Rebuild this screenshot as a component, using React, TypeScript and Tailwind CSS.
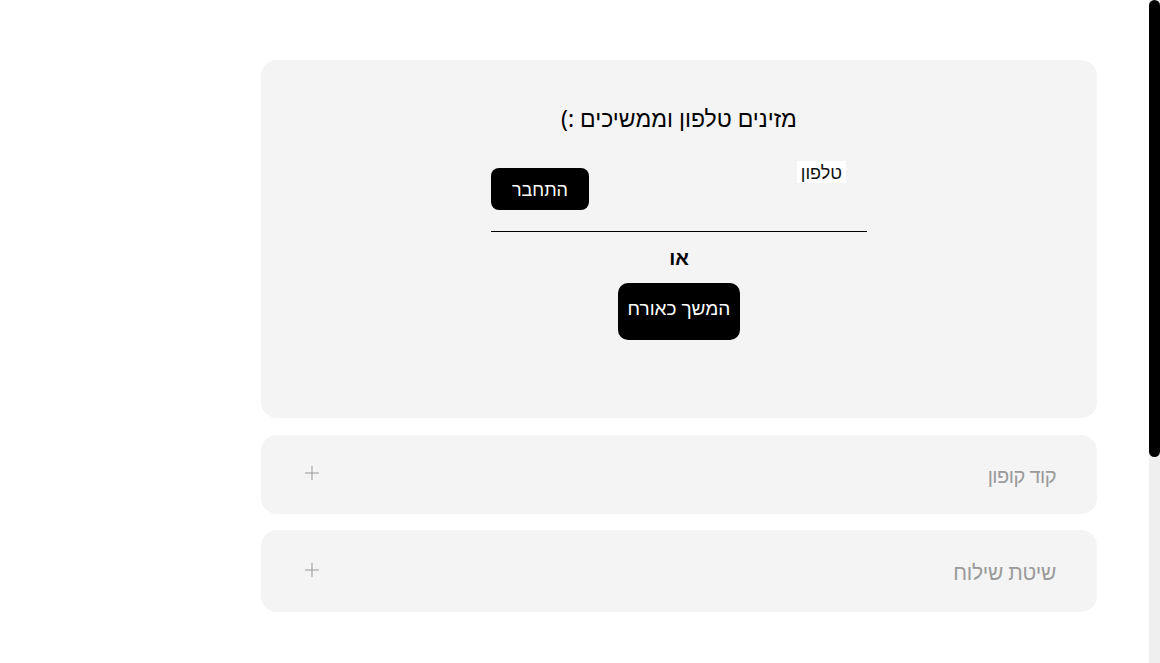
import React from "react";

export default function App() {
  const font = { fontFamily: '"Noto Sans", "Liberation Sans", Arial, sans-serif' };
  return (
    <div className="relative w-[1160px] h-[663px] bg-white overflow-hidden" style={font}>
      <div dir="rtl" className="flex flex-col gap-[16px] pt-[60px] ml-[261px] w-[836px]">
        <div className="h-[358px] rounded-[16px] bg-[#f4f4f4] flex flex-col items-center pt-[43px]">
          <h2 className="text-[23px] leading-[30px] text-black">מזינים טלפון וממשיכים :)</h2>
          <div className="w-[376px] mt-[27px] flex flex-col items-center">
            <div className="w-full h-[72px] border-b border-black flex flex-row justify-between items-start">
              <span className="mr-[21px] mt-[1px] bg-white px-[4px] text-[18px] leading-[22px] text-[#111]">טלפון</span>
              <button className="mt-[8px] w-[98px] h-[42px] rounded-[8px] bg-black text-white text-[18px] leading-[22px]">התחבר</button>
            </div>
            <div className="mt-[14px] text-[20px] leading-[24px] font-bold text-black">או</div>
            <button className="mt-[13px] w-[122px] h-[57px] rounded-[10px] bg-black text-white text-[19px] leading-[24px] pb-[7px]">המשך כאורח</button>
          </div>
        </div>
        <div className="h-[79px] mt-[1px] rounded-[16px] bg-[#f4f4f4] flex flex-row items-center justify-between pr-[41px] pl-[43px]">
          <span className="text-[20px] leading-[24px] text-[#9a9a9a] tracking-[-0.5px] mt-[2px]">קוד קופון</span>
          <svg width="16" height="16" viewBox="0 0 16 16" className="-mt-[3px]">
            <path d="M8 1v14M1 8h14" stroke="#999" strokeWidth="1" fill="none" />
          </svg>
        </div>
        <div className="h-[82px] rounded-[16px] bg-[#f4f4f4] flex flex-row items-center justify-between pr-[41px] pl-[43px]">
          <span className="text-[21px] leading-[24px] text-[#9a9a9a] tracking-[-0.3px] mt-[2px]">שיטת שילוח</span>
          <svg width="16" height="16" viewBox="0 0 16 16" className="-mt-[3px]">
            <path d="M8 1v14M1 8h14" stroke="#999" strokeWidth="1" fill="none" />
          </svg>
        </div>
      </div>
      <div className="absolute top-0 right-0 w-[11px] h-[663px] bg-[#efefef]">
        <div className="w-[11px] h-[457px] rounded-full bg-black"></div>
      </div>
    </div>
  );
}
